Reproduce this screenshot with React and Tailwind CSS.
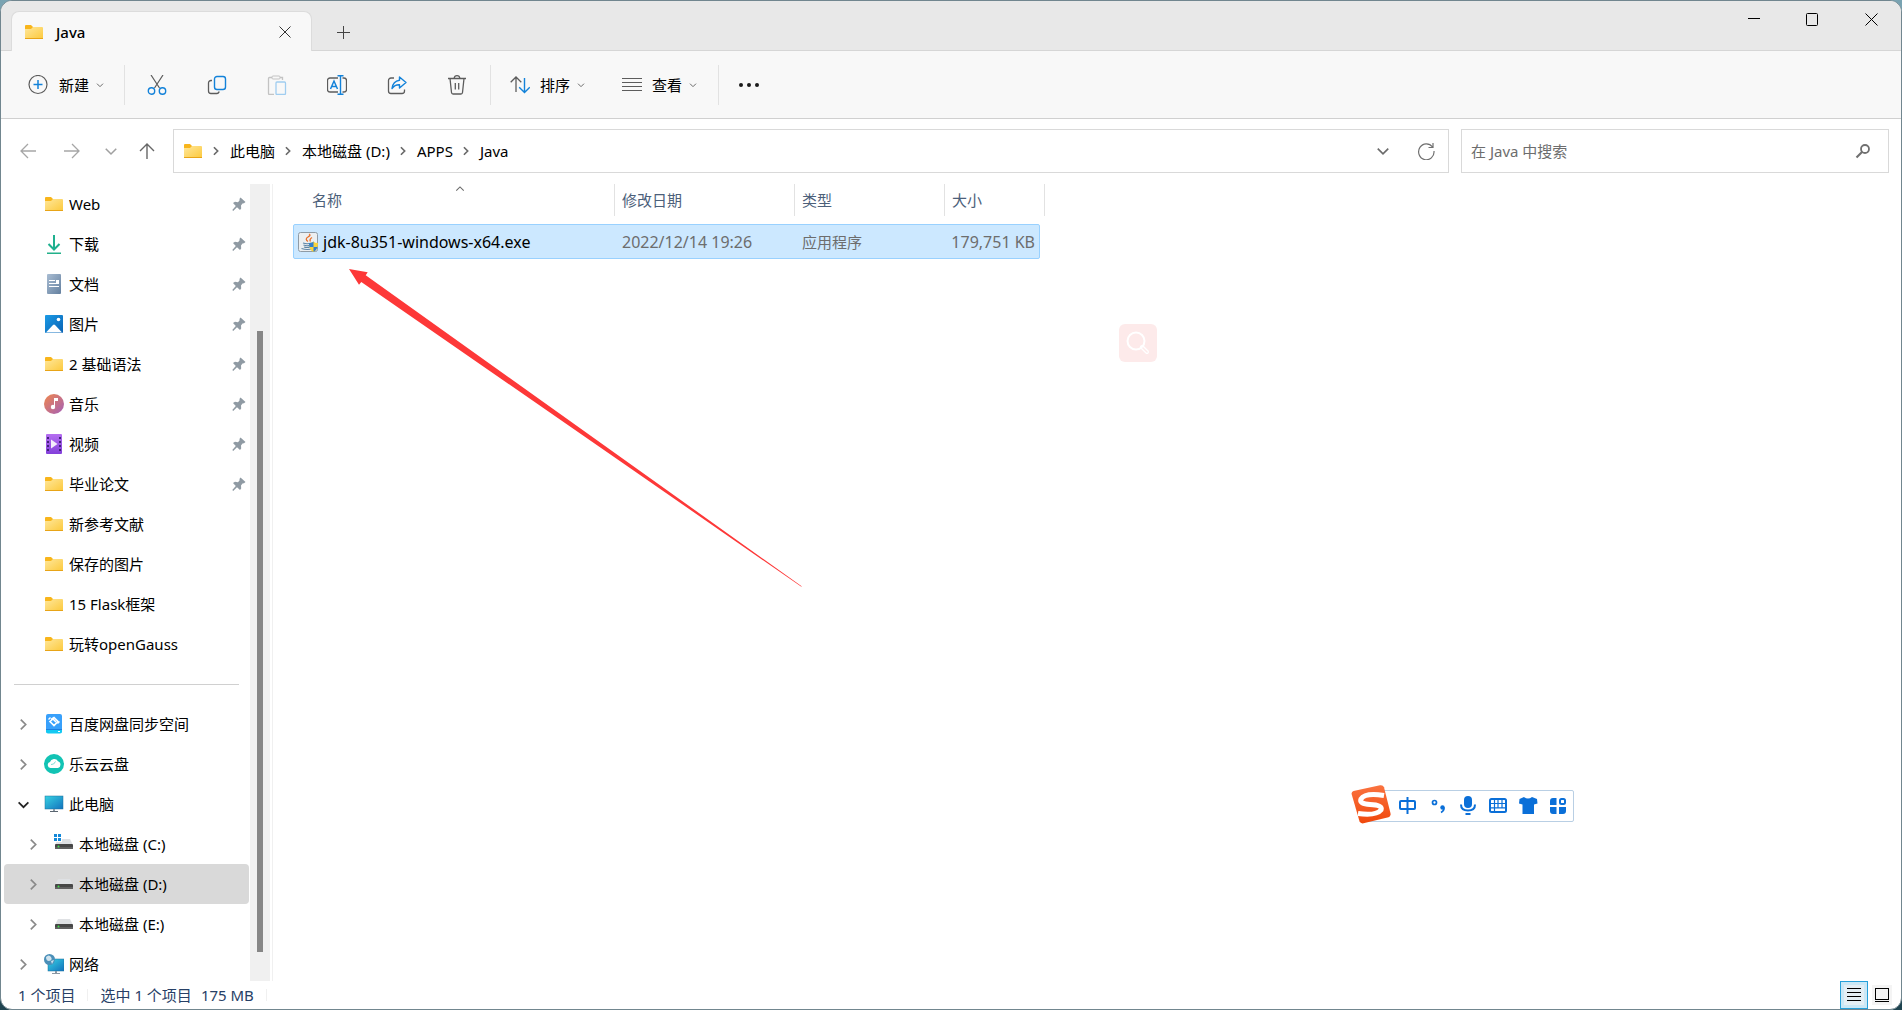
import React from "react";

const Svg = ({ w = 20, h = w, vb, className = "", children }) => (
  <svg width={w} height={h} viewBox={vb || `0 0 ${w} ${h}`} fill="none" className={"shrink-0 " + className} aria-hidden="true">
    {children}
  </svg>
);

const Folder = () => (
  <Svg>
    <defs>
      <linearGradient id="fold" x1="0" y1="0" x2="1" y2="1">
        <stop offset="0" stopColor="#ffe79b" />
        <stop offset="1" stopColor="#fcc93c" />
      </linearGradient>
    </defs>
    <path d="M1 4a1 1 0 0 1 1-1h5l2 2h9v5H1z" fill="#f8b51b" />
    <path d="M1 7h6l2-2h9a1 1 0 0 1 1 1v11H1z" fill="url(#fold)" />
    <path d="M1 16h18v1H1z" fill="#e8a417" />
  </Svg>
);

const Download = () => (
  <Svg>
    <path d="M10 1v14M4.500 10l5.500 5.500 5.500-5.500" stroke="#1fb08f" strokeWidth="2" />
    <path d="M3 19.500h14" stroke="#22b08a" strokeWidth="2" />
  </Svg>
);

const Doc = () => (
  <Svg>
    <defs>
      <linearGradient id="doc" x1="0" y1="0" x2="1" y2="1">
        <stop offset="0" stopColor="#a9bdd3" />
        <stop offset="1" stopColor="#64809f" />
      </linearGradient>
    </defs>
    <rect x="3" y="0" width="14" height="20" rx="1" fill="url(#doc)" />
    <path d="M5 6.500h6M5 9.500h10M5 12.500h10" stroke="#fff" />
    <path d="M12 6h3v3h-3z" fill="#fff" />
  </Svg>
);

const Picture = () => (
  <Svg>
    <defs>
      <linearGradient id="pic" x1="0" y1="0" x2="1" y2="1">
        <stop offset="0" stopColor="#1c9be6" />
        <stop offset="1" stopColor="#0a62b4" />
      </linearGradient>
    </defs>
    <rect x="1" y="1" width="18" height="18" rx="1" fill="url(#pic)" />
    <path d="M2 18.500l7-7.500q1-1 2 0l7 7.500z" fill="#fff" />
    <circle cx="14.500" cy="5.500" r="1.800" fill="#fff" />
  </Svg>
);

const Music = () => (
  <Svg>
    <defs>
      <linearGradient id="mus" x1="0" y1="0" x2="1" y2="1">
        <stop offset="0" stopColor="#f0874c" />
        <stop offset="1" stopColor="#a45fb8" />
      </linearGradient>
    </defs>
    <circle cx="10" cy="10" r="10" fill="url(#mus)" />
    <path d="M10 4h4v3h-3v6h-1z" fill="#fff" />
    <circle cx="9" cy="13" r="2.200" fill="#fff" />
  </Svg>
);

const Video = () => (
  <Svg>
    <defs>
      <linearGradient id="vid" x1="0" y1="0" x2="0" y2="1">
        <stop offset="0" stopColor="#b56ef0" />
        <stop offset="1" stopColor="#8340da" />
      </linearGradient>
    </defs>
    <rect x="2" y="0" width="16" height="20" rx="1" fill="url(#vid)" />
    <path d="M4 3v15M16 3v15" stroke="#43227a" strokeWidth="2" strokeDasharray="2 2" />
    <path d="M7 5.500l6.500 4.500-6.500 4.500z" fill="#f4eefb" />
  </Svg>
);

const Baidu = () => (
  <Svg>
    <rect x="2" y="0" width="16" height="19" rx="2" fill="#38a0fb" />
    <path d="M2 15.500h16v2a2 2 0 0 1-2 2H4a2 2 0 0 1-2-2z" fill="#14c9f2" />
    <path d="M2 15.500h16" stroke="#1d7fe0" />
    <path d="M7 5.500l3-2 4 4-4 4-4-4 3-2.500 3 3" stroke="#fff" strokeWidth="1.600" />
    <path d="M4.500 5.500l2-2M13.500 9.500l2-2" stroke="#fff" strokeWidth="1.400" />
    <path d="M14 17.500h2" stroke="#fff" />
  </Svg>
);

const Cloud = () => (
  <Svg>
    <circle cx="10" cy="10" r="10" fill="#12c3b4" />
    <path d="M6.500 14a3 3 0 0 1-.5-5.900 4.300 4.300 0 0 1 8-.8A3.500 3.500 0 0 1 14 14z" fill="#fff" />
    <path d="M7 10.500q3 .5 4.500-3" stroke="#7fded6" />
  </Svg>
);

const Screen = ({ x = 1, y = 2, w = 18, h = 13 }) => (
  <>
    <defs>
      <linearGradient id="scr" x1="0" y1="0" x2="1" y2="1">
        <stop offset="0" stopColor="#37d2e3" />
        <stop offset="1" stopColor="#1272bd" />
      </linearGradient>
    </defs>
    <rect x={x} y={y} width={w} height={h} fill="url(#scr)" stroke="#1c6f9c" strokeWidth=".5" />
  </>
);

const Computer = () => (
  <Svg>
    <Screen />
    <path d="M9 15h2v2H9z" fill="#8b98a4" />
    <path d="M6 17.500h8" stroke="#5a6570" />
  </Svg>
);

const Disk = ({ windows }) => (
  <Svg>
    <path d="M4 5h12l3 6H1z" fill="#dfe1e4" />
    <rect x="1" y="10" width="18" height="5" rx="1" fill="#474747" />
    <rect x="1" y="13" width="18" height="2" fill="#606060" />
    <circle cx="4.500" cy="12.500" r="1" fill="#3fe04a" />
    {windows && (
      <>
        <path d="M0 0h8v8H0z" fill="#fff" />
        <path d="M0 0h3v3H0zM4 0h3v3H4zM0 4h3v3H0zM4 4h3v3H4z" fill="#1488d8" />
      </>
    )}
  </Svg>
);

const Network = () => (
  <Svg>
    <Screen x={4} y={5} w={16} h={12} />
    <path d="M11 17h2v2h-2z" fill="#8b98a4" />
    <path d="M8 19.500h8" stroke="#8b98a4" />
    <circle cx="5.500" cy="5.500" r="5.500" fill="#4b8fb8" />
    <path d="M2 3q3-3 5 0t-2 4q-3 0-3-4M7 7l3-1-2 4z" fill="#cfe3ee" />
  </Svg>
);

const Pin = () => (
  <Svg w={14} className="mr-[3px]">
    <path d="M8.500.5l5 4.500-1.500 1.200-1.500.3L9 8.500l.2 3L8 13 5 10.200 1.200 14 .3 13l3.500-4L1 6l2-1.200 3 .4L7.500 3.500 7.600 1.800z" fill="#8f9aa3" />
  </Svg>
);

const Chevron = ({ dir = "right", s = 12, sw = 2, color = "#6b6b6b", className }) => (
  <Svg w={s} vb="0 0 12 12" className={className}>
    <path
      d={dir === "right" ? "M3.500 1.500L8 6l-4.500 4.500" : dir === "up" ? "M1.500 8L6 3.500 10.500 8" : "M1.500 4L6 8.500 10.500 4"}
      stroke={color}
      strokeWidth={sw}
    />
  </Svg>
);

const pinned = [
  ["Web", Folder, true],
  ["下载", Download, true],
  ["文档", Doc, true],
  ["图片", Picture, true],
  ["2 基础语法", Folder, true],
  ["音乐", Music, true],
  ["视频", Video, true],
  ["毕业论文", Folder, true],
  ["新参考文献", Folder],
  ["保存的图片", Folder],
  ["15 Flask框架", Folder],
  ["玩转openGauss", Folder],
];

const tree = [
  ["百度网盘同步空间", Baidu],
  ["乐云云盘", Cloud],
  ["此电脑", Computer, { open: true }],
  ["本地磁盘 (C:)", () => <Disk windows />, { child: true }],
  ["本地磁盘 (D:)", Disk, { child: true, selected: true }],
  ["本地磁盘 (E:)", Disk, { child: true }],
  ["网络", Network],
];

const IconButton = ({ label, children }) => (
  <button aria-label={label} className="flex h-10 w-10 items-center justify-center">
    {children}
  </button>
);

const Divider = () => <div className="h-10 w-px bg-[#e2e2e2]" />;

function TabBar() {
  return (
    <header className="flex h-[50px] shrink-0 items-end border-b border-[#d6d6d6] bg-[#e8e8e8]">
      <div className="-mb-px ml-[10px] flex h-10 w-[301px] items-center rounded-t-lg border border-b-0 border-[#dcdcdc] bg-[#f8f8f8] pr-[10px] pl-3">
        <Folder />
        <span className="ml-3 grow font-medium">Java</span>
        <button aria-label="关闭标签页" className="flex h-8 w-8 items-center justify-center">
          <Svg w={12}>
            <path d="M.5.5l11 11M11.500.5l-11 11" stroke="#333" />
          </Svg>
        </button>
      </div>
      <button aria-label="新标签页" className="ml-[15px] flex h-9 w-8 items-center justify-center">
        <Svg w={13}>
          <path d="M6.500 0v13M0 6.500h13" stroke="#444" />
        </Svg>
      </button>
      <div className="ml-auto flex self-start">
        <button aria-label="最小化" className="flex h-9 w-[58px] items-center justify-center">
          <Svg w={12}>
            <path d="M0 5.500h12" stroke="#000" />
          </Svg>
        </button>
        <button aria-label="最大化" className="flex h-9 w-[58px] items-center justify-center">
          <Svg w={13}>
            <rect x=".5" y=".5" width="11" height="12" rx="1" stroke="#000" />
          </Svg>
        </button>
        <button aria-label="关闭" className="flex h-9 w-[60px] items-center justify-center">
          <Svg w={13}>
            <path d="M.5.5l12 12M12.500.5l-12 12" stroke="#000" />
          </Svg>
        </button>
      </div>
    </header>
  );
}

function Toolbar() {
  const g = "#5c5c5c";
  const b = "#1382d9";
  return (
    <div className="flex h-[68px] shrink-0 items-center border-b border-[#d0d0d0] bg-[#f8f8f8] pt-px pl-[27px]">
      <button className="mr-5 flex h-10 items-center">
        <Svg>
          <circle cx="10" cy="9.500" r="9" stroke={g} strokeWidth="1.200" />
          <path d="M10 5v9M5.500 9.500h9" stroke={b} strokeWidth="1.500" />
        </Svg>
        <span className="ml-[11px]">新建</span>
        <Chevron dir="down" s={8} sw={1.5} className="ml-[7px]" />
      </button>
      <Divider />
      <div className="flex gap-5 pr-[13px] pl-3">
        <IconButton label="剪切">
          <Svg>
            <path d="M4 0l8.500 13M16 0L7.500 13" stroke={g} strokeWidth="1.200" />
            <circle cx="4.500" cy="16" r="3.200" stroke={b} strokeWidth="1.400" />
            <circle cx="15.500" cy="16" r="3.200" stroke={b} strokeWidth="1.400" />
          </Svg>
        </IconButton>
        <IconButton label="复制">
          <Svg>
            <path d="M5 5.500H4A2.500 2.500 0 0 0 1.500 8v8A2.500 2.500 0 0 0 4 18.500h6a2.500 2.500 0 0 0 2.200-2" stroke={g} strokeWidth="1.300" />
            <rect x="7.500" y="1.500" width="11" height="13" rx="2.500" stroke={b} strokeWidth="1.400" />
          </Svg>
        </IconButton>
        <IconButton label="粘贴">
          <Svg>
            <path d="M5 2.500H2.500a1 1 0 0 0-1 1v15a1 1 0 0 0 1 1H7M13 2.500h2.500V5" stroke="#c3c3c3" strokeWidth="1.300" />
            <rect x="5" y="1" width="8" height="3" rx="1" stroke="#c3c3c3" />
            <rect x="9" y="7" width="9.500" height="12.500" rx="1" stroke="#a0cdf0" strokeWidth="1.300" />
          </Svg>
        </IconButton>
        <IconButton label="重命名">
          <Svg>
            <path d="M11 3H3a2.500 2.500 0 0 0-2.500 2.500v9A2.500 2.500 0 0 0 3 17h8M15.500 3H17a2.500 2.500 0 0 1 2.500 2.500v9A2.500 2.500 0 0 1 17 17h-1.500" stroke={g} strokeWidth="1.300" />
            <path d="M13.500 1v18M10.500.7h6M10.500 19.300h6" stroke={b} strokeWidth="1.400" />
            <path d="M3.500 14L7 6l3.500 8M4.700 11.500h4.600" stroke={b} strokeWidth="1.500" />
          </Svg>
        </IconButton>
        <IconButton label="共享">
          <Svg>
            <path d="M7 3H4a2.500 2.500 0 0 0-2.500 2.500V16A2.500 2.500 0 0 0 4 18.500h11a2.500 2.500 0 0 0 2.500-2.500v-1.500" stroke={g} strokeWidth="1.300" />
            <path d="M12.500 2l6.500 5.500-6.500 5.500v-3.200Q8 9.500 5 13.500 6 6 12.500 5.200z" stroke={b} strokeWidth="1.400" strokeLinejoin="round" />
          </Svg>
        </IconButton>
        <IconButton label="删除">
          <Svg>
            <path d="M1 3.500h18M7 3.500Q7.500.7 10 .7t3 2.800M3 3.500l1.500 14q.2 1.500 1.500 1.500h8q1.300 0 1.500-1.500l1.500-14M8.300 8v6.500M11.700 8v6.500" stroke={g} strokeWidth="1.300" />
          </Svg>
        </IconButton>
      </div>
      <Divider />
      <button className="ml-[19px] flex h-10 items-center">
        <Svg>
          <path d="M6 2v15M.7 7.300L6 2l5.300 5.300" stroke={g} strokeWidth="1.300" />
          <path d="M14.500 3v14.500M9.200 12.200l5.300 5.300 5.300-5.300" stroke={b} strokeWidth="1.400" />
        </Svg>
        <span className="ml-[10px]">排序</span>
        <Chevron dir="down" s={8} sw={1.5} className="ml-[7px]" />
      </button>
      <button className="ml-[37px] flex h-10 items-center">
        <Svg>
          <path d="M0 3.500h20M0 7.500h20M0 11.500h20M0 15.500h20" stroke={g} />
        </Svg>
        <span className="ml-[10px]">查看</span>
        <Chevron dir="down" s={8} sw={1.5} className="mr-[21px] ml-[7px]" />
      </button>
      <Divider />
      <button aria-label="查看更多" className="ml-5 flex h-10 items-center">
        <Svg>
          <circle cx="2" cy="10" r="2" fill="#1b1b1b" />
          <circle cx="10" cy="10" r="2" fill="#1b1b1b" />
          <circle cx="18" cy="10" r="2" fill="#1b1b1b" />
        </Svg>
      </button>
    </div>
  );
}

function NavBar() {
  return (
    <div className="flex h-[65px] shrink-0 items-center pr-3 pb-px pl-[19px]">
      <button aria-label="后退" className="flex h-8 w-4 items-center">
        <Svg w={16}>
          <path d="M16 8H1M8 1L1 8l7 7" stroke="#a6a6a6" strokeWidth="1.300" />
        </Svg>
      </button>
      <button aria-label="前进" className="ml-7 flex h-8 w-4 items-center">
        <Svg w={16}>
          <path d="M0 8h15M8 1l7 7-7 7" stroke="#a6a6a6" strokeWidth="1.300" />
        </Svg>
      </button>
      <button aria-label="最近浏览的位置" className="ml-6 flex h-8 w-4 items-center">
        <Chevron dir="down" s={14} sw={1.3} color="#a0a0a0" />
      </button>
      <button aria-label="上移" className="ml-[19px] flex h-8 w-4 items-center">
        <Svg w={16}>
          <path d="M8 16V1M1 8l7-7 7 7" stroke="#666" strokeWidth="1.400" />
        </Svg>
      </button>
      <nav className="ml-[18px] flex h-11 grow items-center border border-[#d9d9d9] bg-white pl-[9px]">
        <Folder />
        {["此电脑", "本地磁盘 (D:)", "APPS", "Java"].map((c) => (
          <React.Fragment key={c}>
            <Chevron s={10} className="mr-[9px] ml-2" />
            <a href="#" className="text-black">
              {c}
            </a>
          </React.Fragment>
        ))}
        <button aria-label="以前的位置" className="ml-auto flex h-8 w-8 items-center justify-center">
          <Chevron dir="down" s={14} sw={1.4} />
        </button>
        <button aria-label="刷新" className="mr-[6px] ml-[11px] flex h-8 w-8 items-center justify-center">
          <Svg w={18}>
            <path d="M15.500 5A7.700 8 0 1 0 17 9M16 1v4.500h-4.500" stroke="#707070" strokeWidth="1.200" />
          </Svg>
        </button>
      </nav>
      <label className="ml-3 flex h-11 w-[428px] items-center border border-[#d9d9d9] bg-white pr-[17px] pl-[9px]">
        <input aria-label="搜索" placeholder="在 Java 中搜索" className="min-w-0 grow outline-none placeholder:text-[#6d6d6d]" />
        <Svg w={16}>
          <circle cx="10" cy="6" r="4" stroke="#707070" strokeWidth="1.800" />
          <path d="M7 9l-5.500 5.500" stroke="#707070" strokeWidth="2.200" />
        </Svg>
      </label>
    </div>
  );
}

function Sidebar() {
  return (
    <aside className="flex shrink-0 border-r border-[#f0f0f0] pr-[2px]">
      <ul className="w-[249px] overflow-hidden">
        {pinned.map(([name, Icon, pin]) => (
          <li key={name} className="flex h-10 items-center pr-px pl-[43px]">
            <Icon />
            <a href="#" className="ml-[5px] grow">
              {name}
            </a>
            {pin && <Pin />}
          </li>
        ))}
        <li className="flex h-10 items-center pr-[11px] pl-[13px]">
          <hr className="w-full border-[#d0d0d0]" />
        </li>
        {tree.map(([name, Icon, o = {}]) => (
          <li
            key={name}
            className={
              "flex h-10 items-center " +
              (o.child ? "mr-px ml-[3px] rounded-sm pl-[23px] " : "pl-4 ") +
              (o.selected ? "bg-[#d9d9d9]" : "")
            }
          >
            <button aria-label={"展开 " + name} className="flex w-[27px] shrink-0">
              <Chevron s={13} sw={1.6} dir={o.open ? "down" : "right"} color={o.open ? "#222" : "#8a8a8a"} />
            </button>
            <Icon />
            <a href="#" className="ml-[5px]">
              {name}
            </a>
          </li>
        ))}
      </ul>
      <div className="flex w-5 flex-col items-center bg-[#f0f0f0] pt-[147px] pb-[29px]">
        <div className="w-[6px] grow bg-[#868686]" />
      </div>
    </aside>
  );
}

const JavaExe = () => (
  <Svg>
    <rect x=".5" y=".5" width="19" height="19" rx="2" fill="#eceff1" stroke="#8f9ba5" />
    <path d="M10 9.500Q6.500 7 10 5t1-3M12.500 9.500q-1.500-2 1.500-4" stroke="#e8702a" strokeWidth="1.300" />
    <path d="M5 11q4 1.500 9 0M5.500 13q4 1.500 7 0M6 15q3 1 6 0M3.500 16.500q6 2 11 0" stroke="#5f86a6" strokeWidth="1.200" />
    <path d="M11 11q3.500 0 4.500-1.500Q16.500 11 20 11q0 7-4.500 9-4.500-2-4.500-9z" fill="#f9d33b" />
    <path d="M11 11q3.500 0 4.500-1.500V15h-4q-.5-2-.5-4zM15.500 15h4q-1 3.500-4 5z" fill="#2f7fd0" />
  </Svg>
);

const colHead = "relative h-8 border-r border-[#e2e2e2] text-left font-normal text-[#4c607a]";

function FileList() {
  return (
    <main className="relative grow pl-5">
      <table className="w-[752px] table-fixed border-separate border-spacing-0">
        <thead>
          <tr>
            <th scope="col" className={colHead + " w-[322px] pl-[19px]"}>
              名称
              <Chevron dir="up" s={10} sw={1.3} className="absolute top-0 left-[162px]" />
            </th>
            <th scope="col" className={colHead + " w-[180px] pl-[7px]"}>修改日期</th>
            <th scope="col" className={colHead + " w-[150px] pl-[7px]"}>类型</th>
            <th scope="col" className={colHead + " w-[100px] pl-[7px]"}>大小</th>
          </tr>
        </thead>
      </table>
      <table className="mt-2 w-[747px] table-fixed border-separate border-spacing-0 rounded-xs border border-[#99d1ff] bg-[#cce8ff] text-[#6d6d6d]">
        <tbody>
          <tr>
            <td className="h-[33px] w-[321px] pl-1 text-base leading-5 text-black">
              <a href="#" className="flex items-center">
                <JavaExe />
                <span className="ml-[5px]">jdk-8u351-windows-x64.exe</span>
              </a>
            </td>
            <td className="w-[180px] pl-[7px] text-base leading-5">2022/12/14 19:26</td>
            <td className="w-[150px] pl-[7px]">应用程序</td>
            <td className="pr-1 text-right text-base leading-5">179,751 KB</td>
          </tr>
        </tbody>
      </table>
      <Svg w={454} h={318} className="absolute top-[85px] left-[76px]">
        <path d="M0 0L18.700 3.300 16.700 6.300 453 317.500 452 317.500 12.300 13 10 15.700z" fill="#fd3838" />
      </Svg>
      <div className="absolute top-[140px] left-[846px] flex h-[38px] w-[38px] items-center justify-center rounded-md bg-[#fdeaea]">
        <Svg w={24}>
          <circle cx="10" cy="10" r="8.500" stroke="#fff" strokeWidth="2" />
          <path d="M16 16l5 5" stroke="#fff" strokeWidth="4" strokeLinecap="round" />
          <path d="M17 17l4 4" stroke="#fdeaea" strokeWidth="1.500" strokeLinecap="round" />
        </Svg>
      </div>
      <InputMethod />
    </main>
  );
}

function InputMethod() {
  const b = "#0a6fd8";
  return (
    <div className="absolute top-[606px] left-[1093px] flex h-8 w-[208px] items-center gap-[10px] rounded-xs border border-[#b9cfe4] bg-white pr-[6px] pl-[31px]">
      <Svg w={40} className="absolute -top-[6px] -left-4">
        <defs>
          <linearGradient id="sg" x1="0" y1="0" x2="0" y2="1">
            <stop offset="0" stopColor="#fa7340" />
            <stop offset="1" stopColor="#f0480c" />
          </linearGradient>
        </defs>
        <path d="M2.500 6L29 .3q3-.5 4 2l6.500 26q.5 3-2 4l-25 6q-3 .5-4-2L.6 9q-.3-2 1.900-3z" fill="url(#sg)" />
        <path d="M33 10.500Q14 7.500 10 14q-2 5 9 5.500 13 .5 11 5.500-5 6-23 3.500" stroke="#fff" strokeWidth="5" />
      </Svg>
      <Svg>
        <rect x="2" y="5" width="15" height="8" rx="1" stroke={b} strokeWidth="2" />
        <path d="M9.500 1v17" stroke={b} strokeWidth="2" />
      </Svg>
      <Svg>
        <circle cx="6.500" cy="6.500" r="2" stroke={b} strokeWidth="1.700" />
        <circle cx="14.500" cy="11.500" r="2.200" fill={b} />
        <path d="M16 11.500q.5 3-3 5" stroke={b} strokeWidth="1.500" />
      </Svg>
      <Svg>
        <rect x="6" y="0" width="8" height="12" rx="4" fill={b} />
        <path d="M3 8.500q0 6 7 6t7-6M7.500 18h5" stroke={b} strokeWidth="2" />
      </Svg>
      <Svg>
        <rect x="2" y="3" width="16" height="13" rx="1.500" stroke={b} strokeWidth="2" />
        <path d="M2 7.500h16M2 11.800h16M6.500 3v9M10 3v9M14 3v9M6.500 12v4" stroke={b} strokeWidth="1.200" />
      </Svg>
      <Svg>
        <path d="M6 1q4 3 8 0l5 2 .5 4.500-3.500 1V18H4.500V8.500L1 7.500 1.500 3z" fill={b} />
      </Svg>
      <Svg>
        <path d="M5 2h3.500v7H2V5a3 3 0 0 1 3-3zM2 11h6.500v7H5a3 3 0 0 1-3-3zM11 11h7v4a3 3 0 0 1-3 3h-4z" fill={b} />
        <rect x="12" y="3" width="5" height="5" rx="1.500" stroke={b} strokeWidth="2" />
      </Svg>
    </div>
  );
}

function StatusBar() {
  return (
    <footer className="flex h-[28px] shrink-0 items-center pl-[17px] text-[#274066]">
      <span>1 个项目</span>
      <div className="mx-3 h-3 w-px bg-[#f0f0f0]" />
      <span>选中 1 个项目</span>
      <span className="ml-[9px]">175 MB</span>
      <div className="mx-3 h-3 w-px bg-[#f0f0f0]" />
      <button aria-label="详细信息" className="ml-auto flex h-7 w-7 items-center justify-center border border-[#26a0da] bg-[#cbe8f6]">
        <span className="flex h-5 w-5 items-center justify-center bg-[#e4eff5]">
          <Svg w={14}>
            <path d="M0 .5h14M0 4.500h14M0 8.500h14M0 12.500h14" stroke="#000" />
          </Svg>
        </span>
      </button>
      <button aria-label="大图标" className="mr-[9px] ml-1 flex h-5 w-5 items-center justify-center bg-[#f4f4f4]">
        <Svg w={14}>
          <rect x=".5" y=".5" width="13" height="11" stroke="#000" />
          <path d="M0 13.500h14" stroke="#000" />
        </Svg>
      </button>
    </footer>
  );
}

export default function App() {
  return (
    <div className="h-screen bg-linear-to-b from-[#79a3b2] to-[#1f4450]">
      <div className="flex h-full flex-col overflow-hidden rounded-xl border border-[#71868f] bg-white font-['Noto_Sans','Noto_Sans_CJK_SC',sans-serif] text-[15px] leading-5 text-black">
        <TabBar />
        <Toolbar />
        <NavBar />
        <div className="flex min-h-0 shrink grow basis-0 overflow-hidden">
          <Sidebar />
          <FileList />
        </div>
        <StatusBar />
      </div>
    </div>
  );
}
